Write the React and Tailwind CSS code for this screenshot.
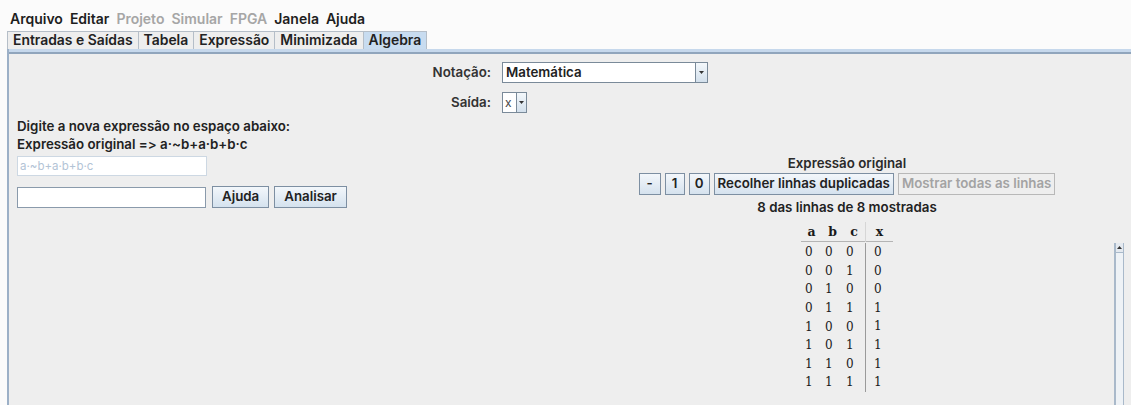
import React from 'react';

const menus = [
  { label: 'Arquivo', on: true },
  { label: 'Editar', on: true },
  { label: 'Projeto', on: false },
  { label: 'Simular', on: false },
  { label: 'FPGA', on: false },
  { label: 'Janela', on: true },
  { label: 'Ajuda', on: true },
];

const tabs = ['Entradas e Saídas', 'Tabela', 'Expressão', 'Minimizada', 'Algebra'];

const rows = [
  [0, 0, 0, 0],
  [0, 0, 1, 0],
  [0, 1, 0, 0],
  [0, 1, 1, 1],
  [1, 0, 0, 1],
  [1, 0, 1, 1],
  [1, 1, 0, 1],
  [1, 1, 1, 1],
];

function DownArrow() {
  return (
    <svg width="5" height="4" viewBox="0 0 5 4">
      <path d="M0 0h5L2.5 3z" fill="#333" />
    </svg>
  );
}

function Combo({ value, width }) {
  return (
    <div className={`flex h-[21px] ${width} border border-[#7a8a99] bg-white`}>
      <span className="flex-1 pl-[3px] leading-[19px] text-[#222] font-semibold truncate">{value}</span>
      <span className="w-[12px] flex items-center justify-center border-l border-[#7a8a99] bg-gradient-to-b from-[#f4f8fb] to-[#d3e0ec]">
        <DownArrow />
      </span>
    </div>
  );
}

function Btn({ children, className = '', disabled }) {
  return (
    <button
      className={
        'h-[22px] border flex items-center justify-center font-semibold ' +
        (disabled
          ? 'border-[#b8b8b8] bg-[#eeeeee] text-[#a3a3a3] '
          : 'border-[#7d8fa2] bg-gradient-to-b from-[#f3f7fb] to-[#d5e2ee] text-[#222] ') +
        className
      }
    >
      {children}
    </button>
  );
}

export default function App() {
  return (
    <div className="w-[1131px] h-[405px] overflow-hidden bg-[#fbfbfb] font-['Inter',sans-serif] text-[13.3px] text-[#222] [font-feature-settings:'calt'_0,'liga'_0] flex flex-col">
      {/* menu bar */}
      <div className="shrink-0 h-[31px] flex items-end pb-[2px] pl-[10px] gap-[7px] font-semibold text-[14px] leading-[21px]">
        {menus.map(m => (
          <span key={m.label} className={m.on ? 'text-[#1e1e1e]' : 'text-[#a6a6a6]'}>{m.label}</span>
        ))}
      </div>

      {/* tab strip */}
      <div className="shrink-0 h-[18px] flex pl-[7px] font-semibold text-[13.9px]">
        {tabs.map(t => (
          <div
            key={t}
            className={
              'h-[18px] px-[5px] leading-[17px] border border-b-0 border-[#b5bec8] -ml-px first:ml-0 ' +
              (t === 'Algebra' ? 'bg-[#c8dcf0]' : 'bg-[#eeeeee]')
            }
          >
            {t}
          </div>
        ))}
      </div>

      {/* content panel */}
      <div className="ml-[7px] flex-1 min-h-0 flex flex-col border-l-2 border-[#9cb0c7] bg-[#eeeeee]">
        <div className="shrink-0 h-[3px] bg-[#c6d8ec]" />
        <div className="shrink-0 h-[2px] bg-[#90a5bc]" />

        {/* notation form */}
        <div className="shrink-0 pt-[8px] flex justify-center pr-[2px]">
          <div className="grid grid-cols-[60px_205px] gap-x-[11px] gap-y-[9px] items-center">
            <span className="text-right font-semibold text-[#333] whitespace-nowrap">Notação:</span>
            <Combo value="Matemática" width="w-[206px]" />
            <span className="text-right font-semibold text-[#333]">Saída:</span>
            <div className="flex h-[21px] w-[25px] border border-[#7a8a99] bg-white">
              <span className="flex-1 pl-[2px] leading-[19px] text-[12px] text-[#444]">x</span>
              <span className="w-[10px] flex items-center justify-center border-l border-[#7a8a99] bg-gradient-to-b from-[#f4f8fb] to-[#d3e0ec]">
                <DownArrow />
              </span>
            </div>
          </div>
        </div>

        <div className="flex flex-1 min-h-0">
          {/* expression entry */}
          <div className="w-[554px] pl-[8px] pt-[4px] font-semibold text-[#222]">
            <div className="h-[18px] leading-[18px]">Digite a nova expressão no espaço abaixo:</div>
            <div className="h-[18px] leading-[18px]">Expressão original =&gt; a·~b+a·b+b·c</div>
            <div className="mt-[3px] w-[190px] h-[20px] border border-[#cdd8e3] bg-white pl-[2px] leading-[18px] text-[11.5px] font-normal text-[#b3c4d6]">
              a·~b+a·b+b·c
            </div>
            <div className="mt-[10px] flex items-center gap-[5px]">
              <div className="w-[189px] h-[21px] border border-[#8a9aab] bg-white mr-[1px]" />
              <Btn className="px-[9px]">Ajuda</Btn>
              <Btn className="px-[9px]">Analisar</Btn>
            </div>
          </div>

          {/* truth table view */}
          <div className="flex-1 flex flex-col items-center pt-[41px] font-semibold text-[#222]">
            <div className="h-[18px] leading-[18px] text-[#2a2a2a]">Expressão original</div>
            <div className="mt-[1px] flex gap-[4px]">
              <Btn className="w-[22px]">-</Btn>
              <Btn className="w-[20px]">1</Btn>
              <Btn className="w-[21px]">0</Btn>
              <Btn className="px-[3px]">Recolher linhas duplicadas</Btn>
              <Btn className="px-[3px]" disabled>Mostrar todas as linhas</Btn>
            </div>
            <div className="mt-[3px] h-[18px] leading-[18px]">8 das linhas de 8 mostradas</div>

            <div className="mt-[6px] w-full grid grid-cols-[1fr_auto_1fr]">
              <div />
              <div className="font-['DejaVu_Serif',serif] text-[12px] font-normal text-[#1a1a1a]">
                <div className="grid grid-cols-[21px_21px_22px_28px] h-[20px] items-center border-b border-[#b4b4b4] font-bold text-[12.5px]">
                  <span className="text-center">a</span>
                  <span className="text-center">b</span>
                  <span className="text-center">c</span>
                  <span className="text-center h-full leading-[20px] border-l border-[#d6d6d6]">x</span>
                </div>
                <div className="pt-[1px]">
                  {rows.map((r, i) => (
                    <div key={i} className="grid grid-cols-[21px_21px_22px_28px] h-[18.6px] items-center">
                      <span className="pl-[4px]">{r[0]}</span>
                      <span className="pl-[3px]">{r[1]}</span>
                      <span className="pl-[3px]">{r[2]}</span>
                      <span className="pl-[8px] h-full leading-[18.6px] border-l border-[#9a9a9a]">{r[3]}</span>
                    </div>
                  ))}
                </div>
              </div>
              <div className="flex justify-end pr-[7px] pt-[21px]">
                <div className="w-[10px] h-[200px] flex flex-col border-l-2 border-r border-[#a9b9ca] bg-[#eef2f6]">
                  <div className="h-[10px] flex items-center justify-center bg-[#e4e9ef] border-b border-[#a9b9ca]">
                    <svg width="5" height="4" viewBox="0 0 5 4">
                      <path d="M2.5 0L5 3H0z" fill="#333" />
                    </svg>
                  </div>
                </div>
              </div>
            </div>
          </div>
        </div>
      </div>
    </div>
  );
}
